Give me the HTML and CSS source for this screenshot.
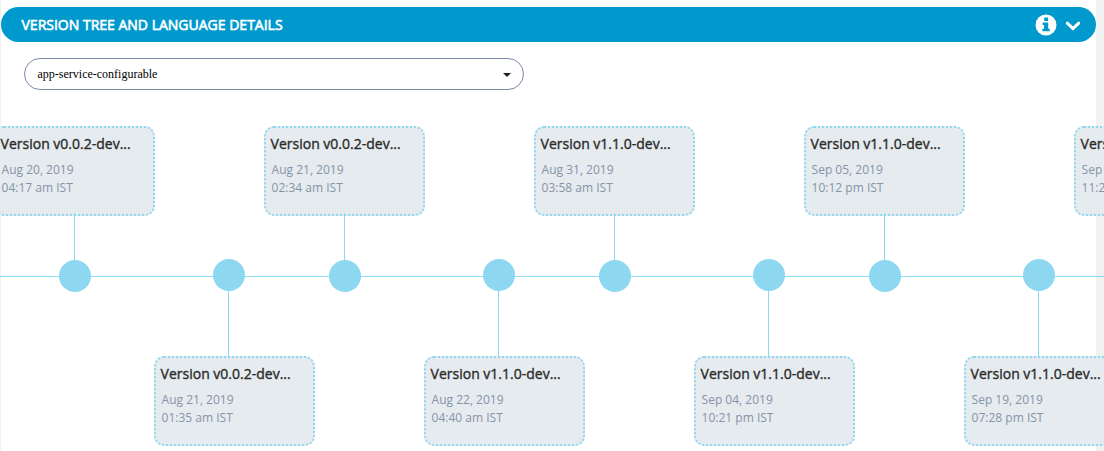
FILE: index.html
```html
<!DOCTYPE html>
<html lang="en">
<head>
<meta charset="utf-8">
<title>Version tree</title>
<link rel="stylesheet" href="styles.css">
</head>
<body>
<main class="panel">
  <header class="panel-header">
    <h2 class="panel-title">Version tree and language details</h2>
    <div class="panel-actions">
      <svg class="info" viewBox="0 0 22 22"><circle cx="11" cy="11" r="10.5" fill="#fff"/><path d="M9.2 3.5h3.9v3.4H9.2zM7.6 8.5h5.6v6.2h1.5v2.6H7.4v-2.6h1.7v-3.6H7.6z" fill="#0099cd"/></svg>
      <svg class="chevron" viewBox="0 0 16 10"><path d="M2.3 2.2L8 7.6l5.7-5.4" fill="none" stroke="#fff" stroke-width="3" stroke-linecap="round"/></svg>
    </div>
  </header>
  <div class="select">
    <span class="select-value">app-service-configurable</span>
    <span class="caret"></span>
  </div>
  <section class="timeline">
    <div class="rail"></div>
    <div class="row row-top">
      <div class="item"><div class="card"><h3 class="version">Version v0.0.2-dev...</h3><p class="date">Aug 20, 2019<br>04:17 am IST</p></div><i class="stem"></i><i class="dot"></i></div>
      <div class="item"><div class="card"><h3 class="version">Version v0.0.2-dev...</h3><p class="date">Aug 21, 2019<br>02:34 am IST</p></div><i class="stem"></i><i class="dot"></i></div>
      <div class="item"><div class="card"><h3 class="version">Version v1.1.0-dev...</h3><p class="date">Aug 31, 2019<br>03:58 am IST</p></div><i class="stem"></i><i class="dot"></i></div>
      <div class="item"><div class="card"><h3 class="version">Version v1.1.0-dev...</h3><p class="date">Sep 05, 2019<br>10:12 pm IST</p></div><i class="stem"></i><i class="dot"></i></div>
      <div class="item"><div class="card"><h3 class="version">Version v1.1.0-dev...</h3><p class="date">Sep 20, 2019<br>11:24 am IST</p></div></div>
    </div>
    <div class="row row-bottom">
      <div class="item"><i class="dot"></i><i class="stem"></i><div class="card"><h3 class="version">Version v0.0.2-dev...</h3><p class="date">Aug 21, 2019<br>01:35 am IST</p></div></div>
      <div class="item"><i class="dot"></i><i class="stem"></i><div class="card"><h3 class="version">Version v1.1.0-dev...</h3><p class="date">Aug 22, 2019<br>04:40 am IST</p></div></div>
      <div class="item"><i class="dot"></i><i class="stem"></i><div class="card"><h3 class="version">Version v1.1.0-dev...</h3><p class="date">Sep 04, 2019<br>10:21 pm IST</p></div></div>
      <div class="item"><i class="dot"></i><i class="stem"></i><div class="card"><h3 class="version">Version v1.1.0-dev...</h3><p class="date">Sep 19, 2019<br>07:28 pm IST</p></div></div>
    </div>
  </section>
</main>
</body>
</html>
```
FILE: styles.css
```css
* { box-sizing: border-box; }
html, body { margin: 0; height: 451px; overflow: hidden; }
body {
  background: #f0f2f1;
  font-family: "Open Sans", sans-serif;
  padding: 0 8px 0 1px;
}
.panel { background: #fff; height: 451px; padding-top: 7px; }
.panel-header {
  display: flex;
  align-items: center;
  justify-content: space-between;
  height: 35px;
  padding: 0 15px 0 20.5px;
  border-radius: 18px;
  background: #0099cd;
  color: #fff;
}
.panel-title {
  margin: 0;
  font-size: 14px;
  font-weight: 400;
  line-height: 20px;
  text-transform: uppercase;
  white-space: nowrap;
  -webkit-text-stroke: 0.6px #fff;
}
.panel-actions { display: flex; align-items: center; gap: 8px; }
.info { width: 22px; height: 22px; margin-top: 1px; }
.chevron { width: 16px; height: 10px; margin-top: 3px; }
.select {
  display: flex;
  align-items: center;
  justify-content: space-between;
  width: 500px;
  height: 32px;
  margin: 16px 0 0 23px;
  padding: 0 12px 0 12.5px;
  border: 1px solid #7c8ba8;
  border-radius: 16px;
}
.select-value {
  font-family: "Liberation Serif", serif;
  font-size: 12px;
  line-height: 16px;
  color: #000;
}
.caret {
  border: 4px solid transparent;
  border-top: 4px solid #222;
  border-bottom: 0;
  margin-top: 2px;
}
.timeline {
  position: relative;
  width: 1104px;
  height: 325px;
  margin: 36px 0 0 -1px;
  overflow: hidden;
}
.rail {
  position: absolute;
  top: 150px;
  left: 0;
  right: 0;
  height: 1px;
  background: #8cd8f0;
}
.row { position: relative; display: flex; gap: 109px; width: max-content; }
.row-top { margin-left: -6px; height: 133px; }
.row-bottom { margin-left: 154px; }
.item { display: flex; flex-direction: column; width: 161px; }
.card {
  width: 161px;
  height: 90px;
  flex: none;
  padding: 7px 4px 7px 4.6px;
  border: 2px dotted #8cd8f0;
  border-radius: 10px;
  background: #e6ebef;
}
.stem {
  position: relative;
  flex: none;
  width: 1px;
  background: #8cd8f0;
}
.row-top .stem { height: 48px; margin: -3px 0 -1px 80px; }
.row-bottom .stem { height: 68px; margin: -1px 0 -2px 74px; z-index: 1; }
.dot {
  flex: none;
  width: 32px;
  height: 32px;
  border-radius: 50%;
  background: #8dd7f0;
}
.row-top .dot { margin-left: 65px; }
.row-bottom .dot { margin-left: 59px; }
.version {
  margin: 0;
  font-size: 14px;
  font-weight: 400;
  line-height: 18px;
  color: #2b2b2b;
  white-space: nowrap;
  -webkit-text-stroke: 0.35px #2b2b2b;
}
.date {
  margin: 8px 0 0 1px;
  font-size: 12px;
  line-height: 18px;
  color: #8594a9;
}
```
